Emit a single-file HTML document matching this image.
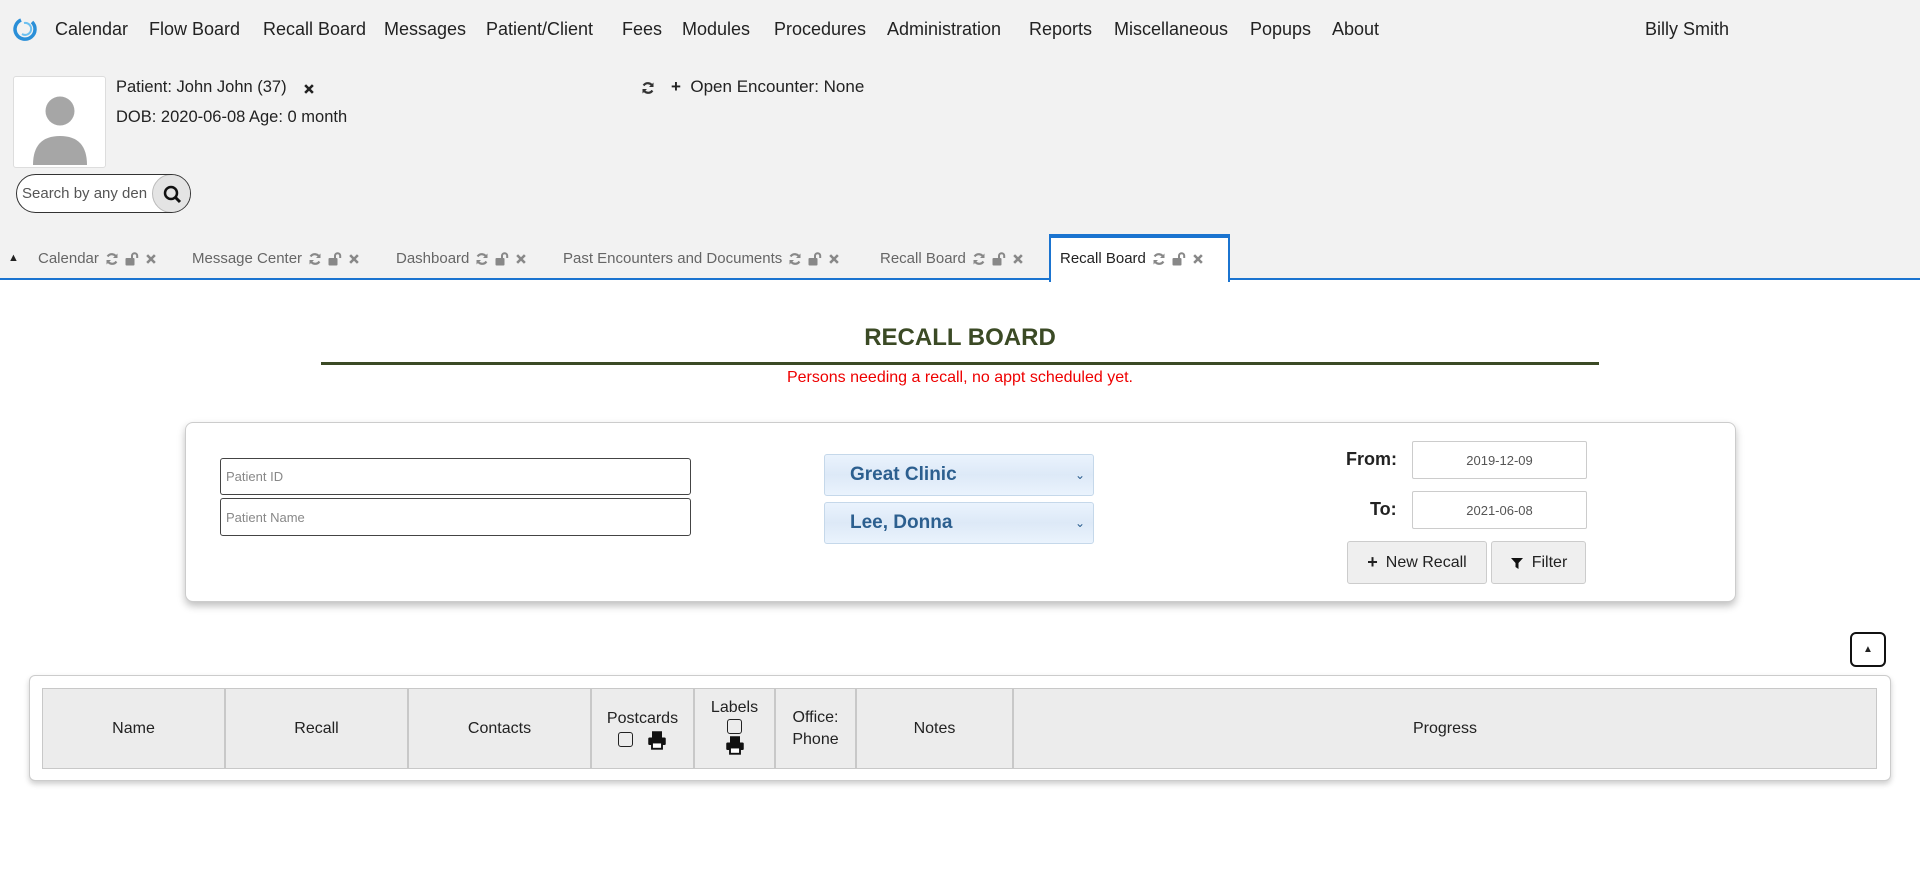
<!DOCTYPE html>
<html><head><meta charset="utf-8">
<style>
*{box-sizing:border-box;margin:0;padding:0}
body{width:1920px;height:888px;background:#fff;font-family:"Liberation Sans",sans-serif;color:#222;position:relative;overflow:hidden}
.a{position:absolute;white-space:nowrap}
#hdr{position:absolute;left:0;top:0;width:1920px;height:280px;background:#f2f2f2;border-bottom:2px solid #1b74d0}
.nav{top:19px;font-size:18px;color:#222}
.tab{top:250px;font-size:15px;color:#666;display:flex;align-items:center;gap:6px}
.tab svg{flex:none}
input,.box{position:absolute;background:#fff}
.inp{border:1px solid #444;border-radius:3px;font-size:13px;color:#888;padding-left:5px;display:flex;align-items:center}
.sel{border:1px solid #c5d8ea;border-radius:3px;background:linear-gradient(#eaf3fd,#dde9f7 50%,#eaf3fd);color:#2c5f8f;font-weight:bold;font-size:19px;padding-left:25px;display:flex;align-items:center}
.date{border:1px solid #ccc;border-radius:2px;font-size:13px;color:#555;display:flex;align-items:center;justify-content:center}
.btn{border:1px solid #ccc;border-radius:3px;background:#efefef;font-size:16px;color:#222;display:flex;align-items:center;justify-content:center}
.th{position:absolute;top:688px;height:81px;background:#ececec;border:1px solid #c8c8c8;font-size:16px;color:#222;display:flex;flex-direction:column;align-items:center;justify-content:center;text-align:center;line-height:22px}
.cb{display:inline-block;width:15px;height:15px;border:1.5px solid #222;border-radius:3px;vertical-align:middle}
</style></head><body>
<svg width="0" height="0" style="position:absolute">
<defs>
<symbol id="rf" viewBox="0 0 14 14"><path d="M11.5 5.5A5 5 0 0 0 2.6 4.5" fill="none" stroke="currentColor" stroke-width="2.2"/><path d="M12.5 1.5V6H8Z" fill="currentColor"/><path d="M2.5 8.5A5 5 0 0 0 11.4 9.5" fill="none" stroke="currentColor" stroke-width="2.2"/><path d="M1.5 12.5V8H6Z" fill="currentColor"/></symbol>
<symbol id="lk" viewBox="0 0 14 14"><rect x="0.5" y="6" width="9" height="7.5" rx="1" fill="currentColor"/><path d="M7 6V3.8A2.6 2.6 0 0 1 12.2 3.8V6" fill="none" stroke="currentColor" stroke-width="2"/></symbol>
<symbol id="xx" viewBox="0 0 14 14"><path d="M2.5 2.5L11.5 11.5M11.5 2.5L2.5 11.5" stroke="currentColor" stroke-width="3"/></symbol>
<symbol id="pr" viewBox="0 0 16 16"><rect x="4" y="1" width="8" height="5" fill="currentColor"/><rect x="1" y="6" width="14" height="6" rx="1" fill="currentColor"/><rect x="4" y="10" width="8" height="5" fill="#fff" stroke="currentColor" stroke-width="1.5"/></symbol>
</defs></svg>
<div id="hdr"></div>
<svg class="a" style="left:12px;top:16px" width="26" height="26" viewBox="0 0 26 26"><path d="M9 4 A10 10 0 1 0 20 6" fill="none" stroke="#2a8fd8" stroke-width="3.5"/><path d="M12 7 A6 6 0 1 1 10 18" fill="none" stroke="#6cc0f0" stroke-width="2"/></svg>
<div class="a nav" style="left:55px">Calendar</div>
<div class="a nav" style="left:149px">Flow Board</div>
<div class="a nav" style="left:263px">Recall Board</div>
<div class="a nav" style="left:384px">Messages</div>
<div class="a nav" style="left:486px">Patient/Client</div>
<div class="a nav" style="left:622px">Fees</div>
<div class="a nav" style="left:682px">Modules</div>
<div class="a nav" style="left:774px">Procedures</div>
<div class="a nav" style="left:887px">Administration</div>
<div class="a nav" style="left:1029px">Reports</div>
<div class="a nav" style="left:1114px">Miscellaneous</div>
<div class="a nav" style="left:1250px">Popups</div>
<div class="a nav" style="left:1332px">About</div>
<div class="a nav" style="left:1645px">Billy Smith</div>

<div class="box" style="left:13px;top:76px;width:93px;height:92px;border:1px solid #ddd;border-radius:3px;overflow:hidden">
<svg width="93" height="92" viewBox="0 0 93 92"><circle cx="46" cy="34" r="14.5" fill="#a6a6a6"/><path d="M19 88 Q19 59 46 59 Q73 59 73 88Z" fill="#a6a6a6"/></svg></div>
<div class="a" style="left:116px;top:78px;font-size:16.5px">Patient: John John (37) &nbsp;&nbsp;</div>
<svg class="a" style="left:303px;top:83px;color:#222" width="12" height="12"><use href="#xx"/></svg>
<div class="a" style="left:116px;top:108px;font-size:16.5px">DOB: 2020-06-08 Age: 0 month</div>
<svg class="a" style="left:641px;top:81px;color:#333" width="14" height="14"><use href="#rf"/></svg>
<div class="a" style="left:671px;top:77px;font-size:17px"><b>+</b>&nbsp; Open Encounter: None</div>
<div class="box" style="left:16px;top:174px;width:175px;height:39px;border:1px solid #333;border-radius:20px;overflow:hidden">
<div class="a" style="left:5px;top:10px;font-size:15px;color:#555">Search by any den</div>
<div class="a" style="left:135px;top:-1px;width:39px;height:39px;border-radius:20px;background:#e4e4e4;border:1px solid #bbb">
<svg width="39" height="39"><circle cx="18" cy="18" r="6" fill="none" stroke="#111" stroke-width="2.5"/><line x1="22" y1="22" x2="27" y2="27" stroke="#111" stroke-width="3"/></svg></div></div>

<div class="a" style="left:8px;top:252px;font-size:11px">▲</div>
<div class="a tab" style="left:38px">Calendar <svg width="14" height="14" style="color:#888"><use href="#rf"/></svg><svg width="14" height="14" style="color:#888"><use href="#lk"/></svg><svg width="12" height="12" style="color:#888"><use href="#xx"/></svg></div>
<div class="a tab" style="left:192px">Message Center <svg width="14" height="14" style="color:#888"><use href="#rf"/></svg><svg width="14" height="14" style="color:#888"><use href="#lk"/></svg><svg width="12" height="12" style="color:#888"><use href="#xx"/></svg></div>
<div class="a tab" style="left:396px">Dashboard <svg width="14" height="14" style="color:#888"><use href="#rf"/></svg><svg width="14" height="14" style="color:#888"><use href="#lk"/></svg><svg width="12" height="12" style="color:#888"><use href="#xx"/></svg></div>
<div class="a tab" style="left:563px">Past Encounters and Documents <svg width="14" height="14" style="color:#888"><use href="#rf"/></svg><svg width="14" height="14" style="color:#888"><use href="#lk"/></svg><svg width="12" height="12" style="color:#888"><use href="#xx"/></svg></div>
<div class="a tab" style="left:880px">Recall Board <svg width="14" height="14" style="color:#888"><use href="#rf"/></svg><svg width="14" height="14" style="color:#888"><use href="#lk"/></svg><svg width="12" height="12" style="color:#888"><use href="#xx"/></svg></div>
<div class="a" style="left:1049px;top:234px;width:181px;height:48px;background:#fff;border:2px solid #1b74d0;border-top:4px solid #1b74d0;border-bottom:none"></div>
<div class="a tab" style="left:1060px;color:#222">Recall Board <svg width="14" height="14" style="color:#888"><use href="#rf"/></svg><svg width="14" height="14" style="color:#888"><use href="#lk"/></svg><svg width="12" height="12" style="color:#888"><use href="#xx"/></svg></div>

<div class="a" style="left:0;width:1920px;top:324px;text-align:center;font-size:24px;font-weight:bold;color:#3b4a25">RECALL BOARD</div>
<div class="a" style="left:321px;top:362px;width:1278px;height:3px;background:#3b4a25"></div>
<div class="a" style="left:0;width:1920px;top:369px;text-align:center;font-size:16px;color:#e00">Persons needing a recall, no appt scheduled yet.</div>

<div class="box" style="left:185px;top:422px;width:1551px;height:180px;border:1px solid #ccc;border-radius:8px;box-shadow:0 4px 8px rgba(0,0,0,.25)"></div>
<div class="box inp" style="left:220px;top:458px;width:471px;height:37px">Patient ID</div>
<div class="box inp" style="left:220px;top:498px;width:471px;height:38px">Patient Name</div>
<div class="box sel" style="left:824px;top:454px;width:270px;height:42px">Great Clinic<span class="a" style="right:8px;font-size:12px;font-weight:normal">⌄</span></div>
<div class="box sel" style="left:824px;top:502px;width:270px;height:42px">Lee, Donna<span class="a" style="right:8px;font-size:12px;font-weight:normal">⌄</span></div>
<div class="a" style="left:1346px;top:449px;font-size:18px;font-weight:bold;color:#222">From:</div>
<div class="a" style="left:1370px;top:499px;font-size:18px;font-weight:bold;color:#222">To:</div>
<div class="box date" style="left:1412px;top:441px;width:175px;height:38px">2019-12-09</div>
<div class="box date" style="left:1412px;top:491px;width:175px;height:38px">2021-06-08</div>
<div class="box btn" style="left:1347px;top:541px;width:140px;height:43px"><b style="margin-right:8px;font-size:18px">+</b>New Recall</div>
<div class="box btn" style="left:1491px;top:541px;width:95px;height:43px"><svg width="14" height="14" style="margin-right:8px"><path d="M1 2H13L8.5 7V13L5.5 11V7Z" fill="#111"/></svg>Filter</div>

<div class="box" style="left:1850px;top:632px;width:36px;height:35px;border:2.5px solid #111;border-radius:6px;display:flex;align-items:center;justify-content:center;font-size:10px">▲</div>

<div class="box" style="left:29px;top:675px;width:1862px;height:106px;border:1px solid #ccc;border-radius:6px;box-shadow:0 3px 6px rgba(0,0,0,.2)"></div>
<div class="th" style="left:42px;width:183px">Name</div>
<div class="th" style="left:225px;width:183px">Recall</div>
<div class="th" style="left:408px;width:183px">Contacts</div>
<div class="th" style="left:591px;width:103px">Postcards<div style="display:flex;align-items:center;gap:14px"><span class="cb"></span><svg width="20" height="20" style="color:#111"><use href="#pr"/></svg></div></div>
<div class="th" style="left:694px;width:81px;justify-content:flex-start;padding-top:8px">Labels<div style="line-height:16px"><span class="cb"></span></div><svg width="20" height="20" style="color:#111"><use href="#pr"/></svg></div>
<div class="th" style="left:775px;width:81px">Office:<br>Phone</div>
<div class="th" style="left:856px;width:157px">Notes</div>
<div class="th" style="left:1013px;width:864px">Progress</div>
</body></html>
